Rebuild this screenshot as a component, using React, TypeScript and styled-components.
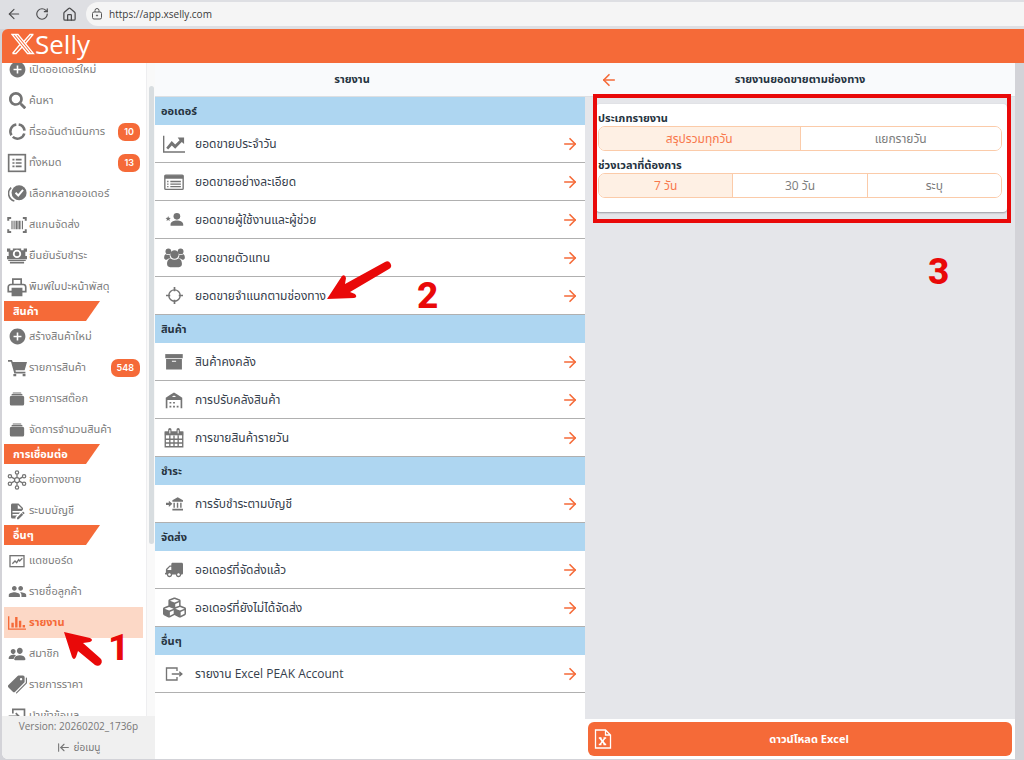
import React, { useState } from "react";
import styled, { createGlobalStyle } from "styled-components";
import { MdAddCircle, MdPeople } from "react-icons/md";
import { FaSearch, FaTruck, FaCubes } from "react-icons/fa";
import { IoAlbums, IoPeople, IoPricetags } from "react-icons/io5";
import { ArrowLeft, ArrowLeftToLine, ArrowRight, House, RotateCw } from "lucide-react";

const ORANGE = "#f56a38";
const RED = "#e90909";
const GREY = "#747474";

const GlobalStyle = createGlobalStyle`
  * { box-sizing: border-box; }
  body { margin: 0; background: #d3d3d8; font-family: "Open Sans", "Noto Sans Thai", "Noto Sans", sans-serif; }
  button, input { font: inherit; color: inherit; }
  h1, h2, p, fieldset, legend { margin: 0; padding: 0; border: 0; }
`;

const Page = styled.div`
  display: flex;
  flex-direction: column;
  height: 100vh;
  min-height: 480px;
  padding-bottom: 1px;
  background: #d3d3d8;
`;

const BrowserBar = styled.div`
  display: flex;
  align-items: center;
  flex: none;
  height: 29px;
  padding: 0 0 1px 6px;
  gap: 13px;
  background: #dedfe3;
`;

const BrowserButton = styled.button`
  display: flex;
  padding: 0;
  border: 0;
  background: none;
  color: #4c4c4e;
`;

const AddressBar = styled.label`
  display: flex;
  align-items: center;
  flex: 1;
  gap: 6px;
  height: 24px;
  margin-left: -4px;
  padding-left: 5px;
  border-radius: 12px 0 0 12px;
  background: #f5f5f5;
  color: #555;
`;

const AddressInput = styled.input`
  flex: 1;
  padding: 0;
  border: 0;
  outline: 0;
  background: none;
  font: 10px "Open Sans", sans-serif;
  color: #3a3a3a;
`;

const AppFrame = styled.div`
  display: flex;
  flex-direction: column;
  flex: 1;
  min-height: 0;
  margin-left: 2px;
  border-radius: 6px 0 0 6px;
  overflow: hidden;
`;

const TopBar = styled.header`
  display: flex;
  align-items: center;
  flex: none;
  height: 34px;
  padding: 0 0 4px 9px;
  background: ${ORANGE};
  color: #fff;
`;

const BrandName = styled.span`
  font: 400 26px/28px "Open Sans", sans-serif;
`;

const Columns = styled.div`
  display: flex;
  flex: 1;
  min-height: 0;
  padding-right: 9px;
`;

const Sidebar = styled.aside`
  position: relative;
  display: flex;
  flex-direction: column;
  flex: none;
  width: 153px;
  background: #fff;
`;

const MenuArea = styled.div`
  display: flex;
  flex: 1;
  min-height: 0;
`;

const Menu = styled.nav`
  flex: 1;
  overflow: hidden;
  padding: 0 3px 0 2px;
`;

const MenuContent = styled.div`
  margin-top: -9px;
`;

const MenuGroup = styled.div`
  margin-bottom: -1px;
`;

const ScrollTrack = styled.div`
  width: 9px;
  padding: 23px 1px 0 2px;
  border-left: 1px solid #eeeef0;
  background: #f9f9f9;
`;

const ScrollThumb = styled.div`
  height: 458px;
  border-radius: 3px;
  background: #d8dde0;
`;

const MenuItem = styled.a<{ $active?: boolean }>`
  display: flex;
  align-items: center;
  gap: 2px;
  height: 31px;
  padding: 0 3px;
  background: ${(p) => (p.$active ? "#fcd8c6" : "transparent")};
  color: ${(p) => (p.$active ? ORANGE : "#7c7c7c")};
  font-size: 11px;
  font-weight: ${(p) => (p.$active ? 700 : 400)};
  text-decoration: none;
  white-space: nowrap;
`;

const MenuIcon = styled.span<{ $active?: boolean }>`
  display: flex;
  justify-content: center;
  flex: none;
  width: 20px;
  color: ${(p) => (p.$active ? ORANGE : GREY)};
`;

const Badge = styled.span`
  margin-left: auto;
  padding: 0 6px;
  border-radius: 7px;
  background: ${ORANGE};
  color: #fff;
  font-family: Inter, sans-serif;
  font-size: 9px;
  font-weight: 600;
  line-height: 18px;
`;

const MenuHeading = styled.h2`
  width: 96px;
  height: 20px;
  padding-left: 9px;
  background: ${ORANGE};
  clip-path: polygon(0 0, 100% 0, 82px 100%, 0 100%);
  color: #fff;
  font-size: 11px;
  font-weight: 700;
  line-height: 20px;
`;

const SidebarFooter = styled.footer`
  display: flex;
  flex-direction: column;
  align-items: center;
  flex: none;
  gap: 5px;
  height: 43px;
  background: #f0f0f0;
  color: #777;
  font-size: 10px;
  line-height: 20px;
`;

const CollapseButton = styled.button`
  display: flex;
  align-items: center;
  gap: 4px;
  height: 12px;
  padding: 0;
  border: 0;
  background: none;
`;

const ListPanel = styled.main`
  position: relative;
  flex: 1;
  min-width: 0;
  background: #fff;
`;

const PanelHeader = styled.div<{ $end: number }>`
  display: grid;
  grid-template-columns: 48px 1fr ${(p) => p.$end}px;
  align-items: center;
  flex: none;
  height: 34px;
  border-bottom: 1px solid #dddfe2;
  background: #f9fafc;
`;

const PanelTitle = styled.h1`
  grid-column: 2;
  color: #263340;
  font-size: 11px;
  font-weight: 700;
  text-align: center;
`;

const BackButton = styled.button`
  display: flex;
  justify-content: center;
  padding: 0;
  border: 0;
  background: none;
  color: ${ORANGE};
`;

const SectionHeading = styled.h2`
  height: 28px;
  padding-left: 6px;
  background: #aed6f1;
  color: #263340;
  font-size: 11px;
  font-weight: 700;
  line-height: 28px;
`;

const ReportRow = styled.a`
  display: grid;
  grid-template-columns: 26px 1fr 16px;
  align-items: center;
  column-gap: 8px;
  height: 38px;
  padding: 0 8px 0 6px;
  border-bottom: 1px solid #b0b0b0;
  color: #36404c;
  font-size: 12px;
  text-decoration: none;
`;

const RowIcon = styled.span`
  display: flex;
  justify-content: center;
  color: ${GREY};
`;

const RowArrow = styled(ArrowRight)`
  color: ${ORANGE};
`;

const DetailPanel = styled.section`
  position: relative;
  display: flex;
  flex-direction: column;
  flex: 1;
  min-width: 0;
  background: #e5e6ea;
`;

const FilterCard = styled.form`
  margin: 7px 8px 0 11px;
  padding: 0 5px 14px 2px;
  border-radius: 4px;
  background: #fff;
  box-shadow: 0 1px 2px #9a9aa0;
`;

const FilterGroup = styled.fieldset`
  min-width: 0;
`;

const FilterLabel = styled.legend`
  height: 22px;
  color: #263340;
  font-size: 11px;
  font-weight: 700;
  line-height: 28px;
`;

const Segments = styled.div`
  display: flex;
  height: 25px;
  border: 1px solid #fbcba9;
  border-radius: 7px;
  overflow: hidden;
`;

const Segment = styled.label<{ $active: boolean }>`
  flex: 1;
  background: ${(p) => (p.$active ? "#fef0e4" : "#fff")};
  color: ${(p) => (p.$active ? "#f8774b" : "#7c7c7c")};
  font-size: 12px;
  line-height: 23px;
  text-align: center;
  & + & { border-left: 1px solid #fbcba9; }
`;

const SegmentInput = styled.input`
  position: absolute;
  opacity: 0;
  margin: 0;
`;

const DetailFooter = styled.footer`
  margin-top: auto;
  padding: 3px;
  background: #fff;
`;

const DownloadButton = styled.button`
  display: grid;
  grid-template-columns: 18px 1fr;
  align-items: center;
  width: 100%;
  height: 34px;
  padding: 0 6px;
  border: 0;
  border-radius: 6px;
  background: ${ORANGE};
  color: #fff;
  font-size: 11px;
  font-weight: 700;
`;

const HighlightFrame = styled.div`
  position: absolute;
  top: 31px;
  left: 8px;
  right: 4px;
  height: 129px;
  border: 4px solid ${RED};
  pointer-events: none;
`;

const StepNumber = styled.span<{ $left: number; $top: number }>`
  position: absolute;
  left: ${(p) => p.$left}px;
  top: ${(p) => p.$top}px;
  color: ${RED};
  font: 800 37px/36px Roboto, sans-serif;
  pointer-events: none;
`;

const StepArrow = styled.svg<{ $left: number; $top: number }>`
  position: absolute;
  left: ${(p) => p.$left}px;
  top: ${(p) => p.$top}px;
  pointer-events: none;
`;

type GlyphProps = { size?: number; children: React.ReactNode; filled?: boolean; width?: number };

const Glyph = ({ size = 20, children, filled, width = 2 }: GlyphProps) => (
  <svg
    width={size}
    height={size}
    viewBox="0 0 24 24"
    fill={filled ? "currentColor" : "none"}
    stroke={filled ? "none" : "currentColor"}
    strokeWidth={width}
    aria-hidden="true"
  >
    {children}
  </svg>
);

const PendingIcon = () => (
  <Glyph width={3.2} size={19}>
    <path d="M13.5 3.2A9 9 0 0 1 20.9 11M20.600 14.500A9 9 0 0 1 6 18.800M4.400 16.800A9 9 0 0 1 10.5 3.1" />
  </Glyph>
);

const AllOrdersIcon = () => (
  <Glyph>
    <rect x="2" y="2" width="20" height="20" />
    <path d="M6.500 8h2.500M6.500 12h2.500M6.500 16h2.500M10.500 8h7M10.500 12h7M10.500 16h7" />
  </Glyph>
);

const MultiSelectIcon = () => (
  <Glyph size={19}>
    <circle cx="14" cy="11" r="9.500" fill="currentColor" stroke="none" />
    <path d="M9.500 11l3.500 3.500 6-7" stroke="#fff" strokeWidth="2.400" />
    <path d="M4 4.500A10 10 0 0 0 8 21.500" />
  </Glyph>
);

const ScanIcon = () => (
  <Glyph>
    <path d="M1.500 7V3.500H5M19 3.500h3.500V7M22.500 17v3.500H19M5 20.500H1.500V17" strokeWidth="2.4" />
    <path d="M6 7v10M8.500 7v10M18.500 7v10" strokeWidth="1.400" />
    <path d="M11.500 7v10M15 7v10" strokeWidth="2.600" />
  </Glyph>
);

const CashIcon = () => (
  <Glyph filled>
    <path
      fillRule="evenodd"
      d="M0 3h4v2h3V3h10v2h3V3h4v4h-2v5h2v4H0v-4h2V7H0zM12 4.500a5 5 0 1 0 0 10 5 5 0 0 0 0-10zM12 6.700a2.800 2.800 0 1 1 0 5.600 2.800 2.800 0 0 1 0-5.600z"
    />
    <path d="M1.500 16.500h21v1.600h-21zM3.500 19h17v2h-17z" />
  </Glyph>
);

const PrinterIcon = () => (
  <Glyph>
    <path d="M7 8.500V2.500h10v6M6 17.500H1.500V12A3 3 0 0 1 4.500 9h15a3 3 0 0 1 3 3v5.500H18" />
    <path d="M6.500 14h11v8h-11z" fill="currentColor" />
  </Glyph>
);

const CartIcon = () => (
  <Glyph size={19} filled>
    <path d="M0 2.500h5l1 2.500h18l-3 10.500H9.500l.3 2H22V19.500H8L3.800 4.600H0z" />
    <path d="M6.800 20.200h3.600v3H6.800zM18.500 20.200h3.600v3h-3.600z" />
  </Glyph>
);

const StockIcon = styled(IoAlbums)`
  transform: scale(1.1);
`;

const ChannelsIcon = () => (
  <Glyph width={1.5}>
    <circle cx="12" cy="12" r="3" />
    <circle cx="12" cy="3" r="2" />
    <circle cx="12" cy="21" r="2" />
    <circle cx="3.500" cy="7.500" r="2" />
    <circle cx="20.500" cy="7.500" r="2" />
    <circle cx="3.500" cy="16.500" r="2" />
    <circle cx="20.500" cy="16.500" r="2" />
    <path d="M12 5v4M12 15v4M5.300 8.500l4 2.200M18.700 8.500l-4 2.200M5.300 15.500l4-2.200M18.700 15.500l-4-2.200" />
  </Glyph>
);

const LedgerIcon = () => (
  <Glyph filled size={18}>
    <path d="M6 2C4.890 2 4 2.890 4 4V20A2 2 0 0 0 6 22H10V20.090L12.090 18H6V16H14.090L16.090 14H6V12H18.090L20 10.090V8L14 2H6M13 3.500L18.500 9H13V3.500M20.150 13C20 13 19.860 13.050 19.750 13.160L18.730 14.180L20.820 16.260L21.840 15.250C22.050 15.030 22.050 14.670 21.840 14.460L20.540 13.160C20.430 13.050 20.290 13 20.150 13M18.140 14.770L12 20.920V23H14.080L20.230 16.850L18.140 14.770Z" />
  </Glyph>
);

const DashboardIcon = () => (
  <Glyph size={16}>
    <rect x="1.500" y="4" width="21" height="16.500" />
    <path d="M5 16l4-4 2.500 2.500 3-4.500 1.500 2 4-4" />
  </Glyph>
);

const ReportIcon = () => (
  <Glyph filled size={18}>
    <path d="M0 3h1.800v16.300H24V21H0zM4.500 11.500h3.200V18H4.500zM9.500 4h3.200v14H9.500zM14.500 9h3.200v9h-3.200zM19.500 14.500h3.200V18h-3.200z" />
  </Glyph>
);

const ImportIcon = () => (
  <Glyph>
    <path d="M7 9V4h14v17H7v-5M2 12.500h12M10.500 8.500l4 4-4 4" />
  </Glyph>
);

const TrendIcon = () => (
  <Glyph filled size={22}>
    <path d="M0 3h1.500v17H24v1.500H0z" />
    <path d="M3.500 16l6-7.200 3.800 3.800 4.800-4.800L16 5h7v7l-2.500-2.200-7.200 7.400-3.700-3.700-4 4.500z" />
  </Glyph>
);

const DetailListIcon = () => (
  <Glyph width={1.5} size={22}>
    <rect x="2" y="4.500" width="20" height="15.500" rx="1" />
    <path d="M2 6.500h20" strokeWidth="4" />
    <path d="M8 11.500h11.500M8 14.300h11.500M8 17.100h11.500M4.500 11.500H6M4.500 14.300H6M4.500 17.100H6" />
  </Glyph>
);

const StarUserIcon = () => (
  <Glyph filled size={19}>
    <circle cx="15" cy="8" r="4.200" />
    <path d="M7 20v-2c0-3 4-4.700 8-4.700s8 1.700 8 4.700v2zM4 7.500l.9 2.300 2.400.2-1.800 1.600.6 2.400L4 12.700 1.900 14l.6-2.400L.7 10l2.400-.2z" />
  </Glyph>
);

const AgentsIcon = () => (
  <Glyph filled size={21}>
    <circle cx="5" cy="5" r="3.300" />
    <circle cx="19" cy="5" r="3.300" />
    <circle cx="12" cy="8.500" r="4.800" />
    <path d="M2.300 8.300C3.500 9.300 5 9.500 6.500 9c0 1.800.4 3 1.200 4H5.500L3 14.500C0 14.500 0 12.500.3 10.800.6 9.300 1.200 8.300 2.300 8.300zM21.700 8.300C20.500 9.300 19 9.500 17.500 9c0 1.800-.4 3-1.200 4h2.200l2.500 1.500c3 0 3-2 2.700-3.700-.3-1.500-.9-2.500-2-2.500z" />
    <path d="M7.500 13.200c2.800 2 6.200 2 9 0 3 .3 4 3.500 4 6.300 0 2.300-1.300 3.500-3.500 3.500H7c-2.200 0-3.500-1.200-3.500-3.500 0-2.800 1-6 4-6.300z" />
  </Glyph>
);

const TargetIcon = () => (
  <Glyph size={17}>
    <circle cx="12" cy="12" r="8" />
    <path d="M12 0v6M12 18v6M0 12h6M18 12h6" strokeWidth="2.400" />
  </Glyph>
);

const ArchiveIcon = () => (
  <Glyph filled size={20}>
    <path d="M1.500 2.500h21v5h-21z" />
    <path fillRule="evenodd" d="M2.500 8.500h19v12.500h-19zM9.500 10.500v1.300h5v-1.300z" />
  </Glyph>
);

const WarehouseIcon = () => (
  <Glyph filled size={18}>
    <path d="M1 9l6-4 5-3 5 3 6 4v14h-2.200V12H3.200v11H1z" />
    <path d="M9 8l3-2 3 2z" fill="#fff" />
    <path d="M6 14.500h2.400v2H6zM10.800 14.500h2.400v2h-2.400zM6 19.500h2.400v2.500H6zM10.800 19.500h2.400v2.500h-2.400zM15.600 19.500H18v2.500h-2.400z" />
  </Glyph>
);

const CalendarIcon = () => (
  <Glyph size={20} width={1.6}>
    <path d="M1.500 5h21v17.500h-21zM1.500 13.500h21M1.500 18h21M7 9v13M12 9v13M17 9v13" />
    <path d="M1 6.500h22" strokeWidth="4.500" />
    <path d="M7 2v5M17 2v5" strokeWidth="4" strokeLinecap="round" />
    <path d="M7 2.500v4M17 2.500v4" stroke="#fff" strokeWidth="1.200" />
  </Glyph>
);

const BankInIcon = () => (
  <Glyph filled size={17}>
    <path d="M0 10.800h4V8l5 4.500-5 4.500v-2.800H0zM16.500 3l7.500 4.500v2H9v-2zM10.500 11h2v7h-2zM15.300 11h2v7h-2zM20 11h2v7h-2zM9 19.500h15v2.500H9z" />
  </Glyph>
);

const ExportIcon = () => (
  <Glyph size={18} width={1.8}>
    <path d="M16 8V4H2v16h14v-4M9 12h13M19 9l3.500 3-3.500 3" />
  </Glyph>
);

const FlippedTruck = styled(FaTruck)`
  transform: scaleX(-1);
`;

const LockIcon = () => (
  <svg width="12" height="12" viewBox="0 0 12 12" fill="none" stroke="currentColor" aria-hidden="true">
    <rect x="1.500" y="4" width="9" height="7" rx="1.500" />
    <path d="M4 4V2.500a2 2 0 0 1 4 0V4" />
    <circle cx="6" cy="7.500" r=".6" fill="currentColor" />
  </svg>
);

const BrandMark = () => (
  <svg width="24" height="22" viewBox="0 0 24 22" fill="none" stroke="#fff" strokeWidth="1.300" aria-hidden="true">
    <path d="M1 1.500h6L22.500 20.500h-6zM4 1.500l15.500 19" />
    <path d="M22.500 1.500H19L12.800 8.500M1.500 20.500H5l6-6.500M22 1.500L14.500 10.500M9 11.500L1.500 20.500" />
  </svg>
);

const ExcelIcon = () => (
  <svg width="18" height="20" viewBox="0 0 18 20" fill="none" stroke="#fff" strokeWidth="1.300" aria-hidden="true">
    <path d="M1.500 1h10l5 5v13h-15zM11.500 1v5h5" />
    <path d="M6 9l5 6.500" strokeWidth="2" />
    <path d="M11 9L6 15.500M4.800 9h2.700M9.500 9h2.700M4.800 15.500h2.700M9.500 15.500h2.700" />
  </svg>
);

type MenuEntry = { label: string; icon: React.ReactNode; badge?: string; active?: boolean };
type MenuSection = { title?: string; items: MenuEntry[] };

const MENU: MenuSection[] = [
  {
    items: [
      { label: "เปิดออเดอร์ใหม่", icon: <MdAddCircle size={19} /> },
      { label: "ค้นหา", icon: <FaSearch size={17} /> },
      { label: "ที่รอฉันดำเนินการ", icon: <PendingIcon />, badge: "10" },
      { label: "ทั้งหมด", icon: <AllOrdersIcon />, badge: "13" },
      { label: "เลือกหลายออเดอร์", icon: <MultiSelectIcon /> },
      { label: "สแกนจัดส่ง", icon: <ScanIcon /> },
      { label: "ยืนยันรับชำระ", icon: <CashIcon /> },
      { label: "พิมพ์ใบปะหน้าพัสดุ", icon: <PrinterIcon /> },
    ],
  },
  {
    title: "สินค้า",
    items: [
      { label: "สร้างสินค้าใหม่", icon: <MdAddCircle size={19} /> },
      { label: "รายการสินค้า", icon: <CartIcon />, badge: "548" },
      { label: "รายการสต๊อก", icon: <StockIcon size={16} /> },
      { label: "จัดการจำนวนสินค้า", icon: <StockIcon size={16} /> },
    ],
  },
  {
    title: "การเชื่อมต่อ",
    items: [
      { label: "ช่องทางขาย", icon: <ChannelsIcon /> },
      { label: "ระบบบัญชี", icon: <LedgerIcon /> },
    ],
  },
  {
    title: "อื่นๆ",
    items: [
      { label: "แดชบอร์ด", icon: <DashboardIcon /> },
      { label: "รายชื่อลูกค้า", icon: <MdPeople size={19} /> },
      { label: "รายงาน", icon: <ReportIcon />, active: true },
      { label: "สมาชิก", icon: <IoPeople size={18} /> },
      { label: "รายการราคา", icon: <IoPricetags size={19} /> },
      { label: "นำเข้าข้อมูล", icon: <ImportIcon /> },
    ],
  },
];

const REPORTS = [
  {
    title: "ออเดอร์",
    items: [
      { label: "ยอดขายประจำวัน", icon: <TrendIcon /> },
      { label: "ยอดขายอย่างละเอียด", icon: <DetailListIcon /> },
      { label: "ยอดขายผู้ใช้งานและผู้ช่วย", icon: <StarUserIcon /> },
      { label: "ยอดขายตัวแทน", icon: <AgentsIcon /> },
      { label: "ยอดขายจำแนกตามช่องทาง", icon: <TargetIcon /> },
    ],
  },
  {
    title: "สินค้า",
    items: [
      { label: "สินค้าคงคลัง", icon: <ArchiveIcon /> },
      { label: "การปรับคลังสินค้า", icon: <WarehouseIcon /> },
      { label: "การขายสินค้ารายวัน", icon: <CalendarIcon /> },
    ],
  },
  { title: "ชำระ", items: [{ label: "การรับชำระตามบัญชี", icon: <BankInIcon /> }] },
  {
    title: "จัดส่ง",
    items: [
      { label: "ออเดอร์ที่จัดส่งแล้ว", icon: <FlippedTruck size={18} /> },
      { label: "ออเดอร์ที่ยังไม่ได้จัดส่ง", icon: <FaCubes size={23} /> },
    ],
  },
  { title: "อื่นๆ", items: [{ label: "รายงาน Excel PEAK Account", icon: <ExportIcon /> }] },
];

type ChoiceProps = { name: string; label: string; options: string[] };

const Choice = ({ name, label, options }: ChoiceProps) => {
  const [value, setValue] = useState(options[0]);
  return (
    <FilterGroup>
      <FilterLabel>{label}</FilterLabel>
      <Segments>
        {options.map((option) => (
          <Segment key={option} $active={option === value}>
            <SegmentInput
              type="radio"
              name={name}
              checked={option === value}
              onChange={() => setValue(option)}
            />
            {option}
          </Segment>
        ))}
      </Segments>
    </FilterGroup>
  );
};

export default function App() {
  return (
    <Page>
      <GlobalStyle />
      <BrowserBar>
        <BrowserButton aria-label="Back"><ArrowLeft size={16} strokeWidth={1.7} /></BrowserButton>
        <BrowserButton aria-label="Reload"><RotateCw size={14} strokeWidth={2} /></BrowserButton>
        <BrowserButton aria-label="Home"><House size={15} strokeWidth={2} /></BrowserButton>
        <AddressBar>
          <LockIcon />
          <AddressInput aria-label="Address" defaultValue="https://app.xselly.com" />
        </AddressBar>
      </BrowserBar>
      <AppFrame>
        <TopBar>
          <BrandMark />
          <BrandName>Selly</BrandName>
        </TopBar>
        <Columns>
          <Sidebar>
            <MenuArea>
              <Menu>
                <MenuContent>
                  {MENU.map((section, i) => (
                    <MenuGroup key={i}>
                      {section.title && <MenuHeading>{section.title}</MenuHeading>}
                      {section.items.map((item) => (
                        <MenuItem key={item.label} href="#" $active={item.active}>
                          <MenuIcon $active={item.active}>{item.icon}</MenuIcon>
                          {item.label}
                          {item.badge && <Badge>{item.badge}</Badge>}
                        </MenuItem>
                      ))}
                    </MenuGroup>
                  ))}
                </MenuContent>
              </Menu>
              <ScrollTrack><ScrollThumb /></ScrollTrack>
            </MenuArea>
            <SidebarFooter>
              <p>Version: 20260202_1736p</p>
              <CollapseButton><ArrowLeftToLine size={13} />ย่อเมนู</CollapseButton>
            </SidebarFooter>
            <StepArrow $left={61} $top={568} width="42" height="40" viewBox="0 0 42 40">
              <path d="M1 1L27 7Q31 9 27 11L20 12L37 27A4 4 0 0 1 32 34L15 20L13 26Q11 30 9 26Z" fill={RED} />
            </StepArrow>
            <StepNumber $left={106} $top={567}>1</StepNumber>
          </Sidebar>
          <ListPanel>
            <PanelHeader $end={84}><PanelTitle>รายงาน</PanelTitle></PanelHeader>
            {REPORTS.map((section) => (
              <div key={section.title}>
                <SectionHeading>{section.title}</SectionHeading>
                {section.items.map((item) => (
                  <ReportRow key={item.label} href="#">
                    <RowIcon>{item.icon}</RowIcon>
                    {item.label}
                    <RowArrow size={18} strokeWidth={2.2} />
                  </ReportRow>
                ))}
              </div>
            ))}
            <StepArrow $left={171} $top={197} width="68" height="42" viewBox="0 0 68 42">
              <path d="M1 39L16 16Q19 14 20 18L19 24L59 2A4 4 0 0 1 63 9L24 32L29 34Q32 37 28 38Z" fill={RED} />
            </StepArrow>
            <StepNumber $left={262} $top={215}>2</StepNumber>
          </ListPanel>
          <DetailPanel>
            <PanelHeader $end={48}>
              <BackButton aria-label="Back to reports"><ArrowLeft size={18} strokeWidth={2.2} /></BackButton>
              <PanelTitle>รายงานยอดขายตามช่องทาง</PanelTitle>
            </PanelHeader>
            <FilterCard>
              <Choice name="kind" label="ประเภทรายงาน" options={["สรุปรวมทุกวัน", "แยกรายวัน"]} />
              <Choice name="period" label="ช่วงเวลาที่ต้องการ" options={["7 วัน", "30 วัน", "ระบุ"]} />
            </FilterCard>
            <DetailFooter>
              <DownloadButton>
                <ExcelIcon />
                <span>ดาวน์โหลด Excel</span>
              </DownloadButton>
            </DetailFooter>
            <HighlightFrame />
            <StepNumber $left={343} $top={191}>3</StepNumber>
          </DetailPanel>
        </Columns>
      </AppFrame>
    </Page>
  );
}
